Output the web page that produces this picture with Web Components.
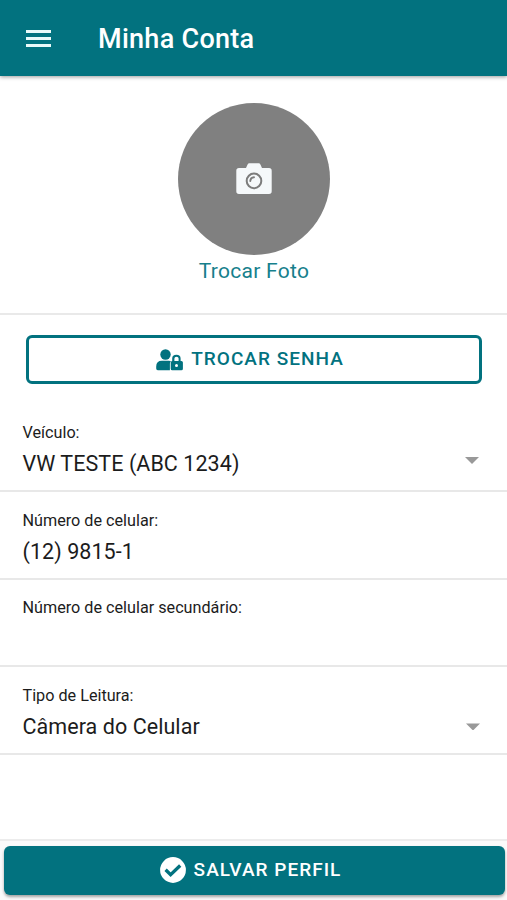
<!DOCTYPE html>
<html lang="pt-BR">
<head>
<meta charset="utf-8">
<title>Minha Conta</title>
<style>
html,body{margin:0;height:100%}
body{font-family:Roboto,"Liberation Sans",sans-serif;background:#fff;color:#1c1c1c;--teal:#02727f;overflow:hidden}
</style>
</head>
<body>
<account-page></account-page>
<script>
function define(name, html) {
  customElements.define(name, class extends HTMLElement {
    constructor() {
      super();
      const t = document.createElement('template');
      t.innerHTML = html;
      this.attachShadow({mode: 'open'}).appendChild(t.content.cloneNode(true));
    }
  });
}

define('app-header', `
<style>
:host{display:flex;align-items:center;height:76px;flex:none;box-sizing:border-box;padding-left:26px;background:var(--teal);color:#fff;box-shadow:0 1px 4px rgba(0,0,0,.4);z-index:1}
svg{display:block;width:25px;height:17px;margin-right:47px}
h1{margin:0;padding-top:2px;font-size:27px;line-height:32px;font-weight:500;letter-spacing:.28px}
</style>
<svg viewBox="0 0 25 17" fill="#e9fafa"><path d="M0 0h25v3H0zM0 7h25v3H0zM0 14h25v3H0z"/></svg>
<h1><slot></slot></h1>`);

define('photo-picker', `
<style>
:host{display:flex;flex-direction:column;align-items:center;height:239px;flex:none;box-sizing:border-box;padding-top:27px;border-bottom:2px solid #e9e9e9}
.photo{display:flex;align-items:center;justify-content:center;width:152px;height:152px;border-radius:50%;background:#808080;box-sizing:border-box}
svg{display:block;width:36px;height:32px;margin-left:1px}
.label{margin:2px 0 0 1px;font-size:21px;line-height:28px;color:#16808c;letter-spacing:.27px}
</style>
<div class="photo"><svg viewBox="0 0 36 32">
<path fill="#f5f8fa" d="M3 5h7l1.6-3.6Q12.2.3 13.3.3h9.4q1.1 0 1.7 1.1L26 5h7q2.7 0 2.7 2.7v20.6q0 2.7-2.7 2.7H3Q.3 31 .3 28.300V7.700Q.3 5 3 5z"/>
<g fill="none" stroke="#7c7c7c"><circle cx="18" cy="17.900" r="7.300" stroke-width="2"/><path stroke-width="1.900" stroke-linecap="round" d="M14.300 18q.2-3.500 3.700-3.700"/></g>
</svg></div>
<div class="label"><slot></slot></div>`);

define('app-button', `
<style>
:host{display:flex;align-items:center;justify-content:center;flex:none;height:49px;box-sizing:border-box;padding-right:8px;border-radius:6px;font-size:19px;font-weight:500;line-height:24px;letter-spacing:1.03px}
:host([kind=outline]){border:3px solid var(--teal);color:var(--teal)}
:host([kind=solid]){background:var(--teal);color:#fff;box-shadow:0 2px 3px rgba(0,0,0,.35)}
slot[name=icon]{display:flex}
.text{margin:-1px 0 0 8px}
</style>
<slot name="icon"></slot><span class="text"><slot></slot></span>`);

define('user-lock-icon', `
<style>:host,svg{display:block}svg{width:27px;height:22px}</style>
<svg viewBox="0 0 27 22" fill="var(--teal)">
<circle cx="9.500" cy="5.500" r="5.200"/>
<path d="M6 11.800h7q1 0 2 .5-1.100.8-1.100 2.200v6.700H1.800Q.2 21.200.2 19.600v-2q0-5.800 5.800-5.800z"/>
<path fill-rule="evenodd" d="M16.200 12V9.400q0-3.700 4.200-3.700t4.200 3.700V12h.8q1.500 0 1.500 1.500v6.200q0 1.500-1.500 1.500h-9.200q-1.500 0-1.500-1.500v-6.200q0-1.500 1.500-1.500zm2.200 0h4.200V9.600q0-1.800-2.100-1.800t-2.100 1.800zm2.100 3.100a1.500 1.500 0 1 0 0 3 1.500 1.500 0 1 0 0-3z"/>
</svg>`);

define('check-icon', `
<style>:host,svg{display:block}svg{width:26px;height:26px;margin-top:-1px}</style>
<svg viewBox="0 0 26 26"><circle cx="13" cy="13" r="12.900" fill="#fff"/><path d="M5.600 12.800l5 4.900 9.600-9.200" fill="none" stroke="var(--teal)" stroke-width="3.300"/></svg>`);

define('form-field', `
<style>
:host{display:grid;grid-template-columns:1fr auto;grid-template-rows:22px 40px;align-items:center;height:87.600px;flex:none;box-sizing:border-box;padding:17.600px 27px 0 22.500px;border-bottom:2px solid #e8e8e8}
.label{grid-column:1/3;font-size:16.200px;line-height:22px}
.value{font-size:21.500px;line-height:28px;letter-spacing:.06px}
.arrow{display:none;width:14px;height:7px;margin:var(--arrow-margin,-7px 1px 0 0);background:#999;clip-path:polygon(0 0,100% 0,50% 100%)}
:host([select]) .arrow{display:block}
</style>
<span class="label"><slot name="label"></slot></span>
<span class="value"><slot></slot></span><i class="arrow"></i>`);

define('account-page', `
<style>
:host{display:flex;flex-direction:column;height:100vh}
.senha{margin:20px 25px 0 26px}
.fields{margin-top:20.500px;flex:1}
.reading{--arrow-margin:0}
footer{flex:none;height:61px;box-sizing:border-box;border-top:2px solid #ececec;padding:5px 2px 0 4px;background:#fafafa}
</style>
<app-header>Minha Conta</app-header>
<photo-picker>Trocar Foto</photo-picker>
<app-button class="senha" kind="outline"><user-lock-icon slot="icon"></user-lock-icon>TROCAR SENHA</app-button>
<div class="fields">
<form-field select><span slot="label">Veículo:</span>VW TESTE (ABC 1234)</form-field>
<form-field><span slot="label">Número de celular:</span>(12) 9815-1</form-field>
<form-field><span slot="label">Número de celular secundário:</span></form-field>
<form-field class="reading" select><span slot="label">Tipo de Leitura:</span>Câmera do Celular</form-field>
</div>
<footer><app-button kind="solid"><check-icon slot="icon"></check-icon>SALVAR PERFIL</app-button></footer>`);
</script>
</body>
</html>
